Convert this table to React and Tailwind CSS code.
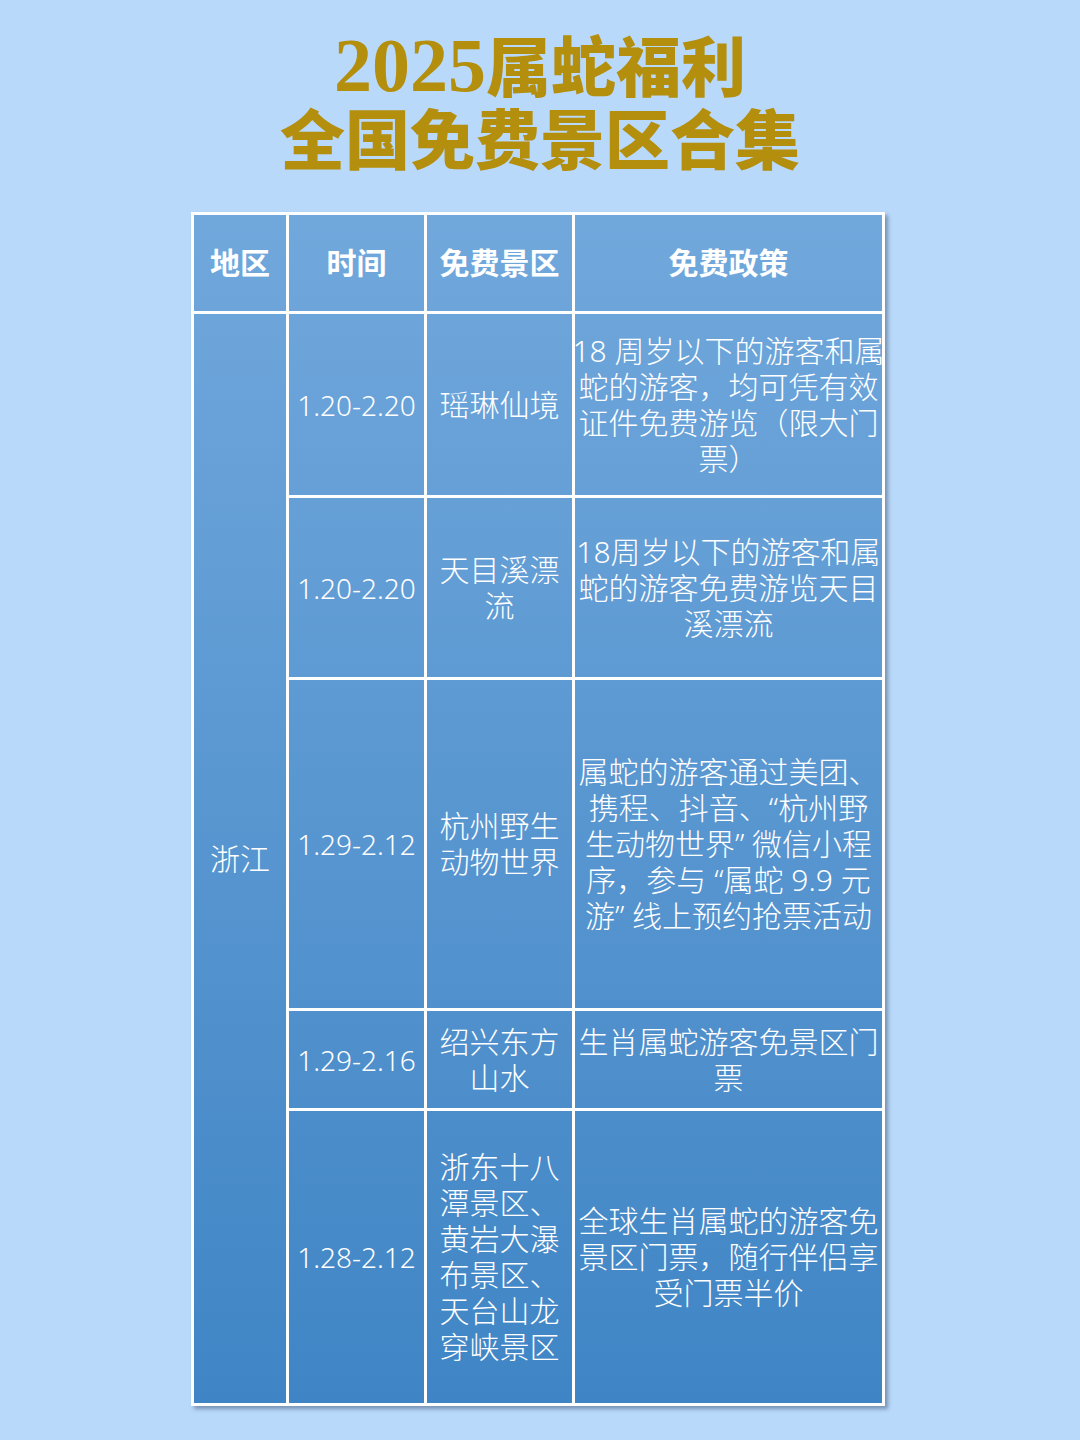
import React from "react";

const rows = [
  {
    date: "1.20-2.20",
    spot: ["瑶琳仙境"],
    policy: ["18 周岁以下的游客和属", "蛇的游客，均可凭有效", "证件免费游览（限大门", "票）"],
  },
  {
    date: "1.20-2.20",
    spot: ["天目溪漂", "流"],
    policy: ["18周岁以下的游客和属", "蛇的游客免费游览天目", "溪漂流"],
  },
  {
    date: "1.29-2.12",
    spot: ["杭州野生", "动物世界"],
    policy: [
      "属蛇的游客通过美团、",
      "携程、抖音、“杭州野",
      "生动物世界” 微信小程",
      "序，参与 “属蛇 9.9 元",
      "游” 线上预约抢票活动",
    ],
  },
  {
    date: "1.29-2.16",
    spot: ["绍兴东方", "山水"],
    policy: ["生肖属蛇游客免景区门", "票"],
  },
  {
    date: "1.28-2.12",
    spot: ["浙东十八", "潭景区、", "黄岩大瀑", "布景区、", "天台山龙", "穿峡景区"],
    policy: ["全球生肖属蛇的游客免", "景区门票，随行伴侣享", "受门票半价"],
  },
];

const rowClasses = [
  "row-start-2",
  "row-start-3",
  "row-start-4",
  "row-start-5",
  "row-start-6",
];

function Lines({ lines }) {
  return (
    <div className="flex flex-col items-center">
      {lines.map((l, i) => (
        <div key={i} className="whitespace-nowrap">
          {l}
        </div>
      ))}
    </div>
  );
}

const cell =
  "flex items-center justify-center border-l-[3px] border-t-[3px] border-white text-center";

export default function App() {
  return (
    <div
      className="min-h-[1440px] w-full bg-[#b9d9fb] pt-[27px] pb-10"
      style={{ fontFamily: '"Noto Sans", "Noto Sans CJK SC", sans-serif' }}
    >
      <h1
        className="text-center text-[65px] font-black leading-[73px] text-[#b48e0d]"
        style={{ fontFamily: '"Liberation Serif", "Noto Sans CJK SC", serif' }}
      >
        <div>
          <span className="text-[76px] leading-none">2025</span>属蛇福利
        </div>
        <div>全国免费景区合集</div>
      </h1>

      <div className="ml-[191px] mt-[33px] grid w-[694px] grid-cols-[95px_138px_148px_310px] grid-rows-[99px_184px_182px_331px_100px_295px] border-r-[3px] border-b-[3px] border-white bg-linear-to-b from-[#71a8dc] to-[#3f85c5] text-[30px] font-light leading-[36px] text-white shadow-[3px_3px_4px_rgba(40,60,90,0.45)]">
        <div className={`${cell} font-bold`}>地区</div>
        <div className={`${cell} font-bold`}>时间</div>
        <div className={`${cell} font-bold`}>免费景区</div>
        <div className={`${cell} font-bold`}>免费政策</div>

        <div className={`${cell} col-start-1 row-span-5 row-start-2`}>浙江</div>

        {rows.map((r, i) => (
          <React.Fragment key={i}>
            <div className={`${cell} col-start-2 ${rowClasses[i]} text-[28px]`}>
              {r.date}
            </div>
            <div className={`${cell} col-start-3 ${rowClasses[i]}`}>
              <Lines lines={r.spot} />
            </div>
            <div className={`${cell} col-start-4 ${rowClasses[i]}`}>
              <Lines lines={r.policy} />
            </div>
          </React.Fragment>
        ))}
      </div>
    </div>
  );
}
